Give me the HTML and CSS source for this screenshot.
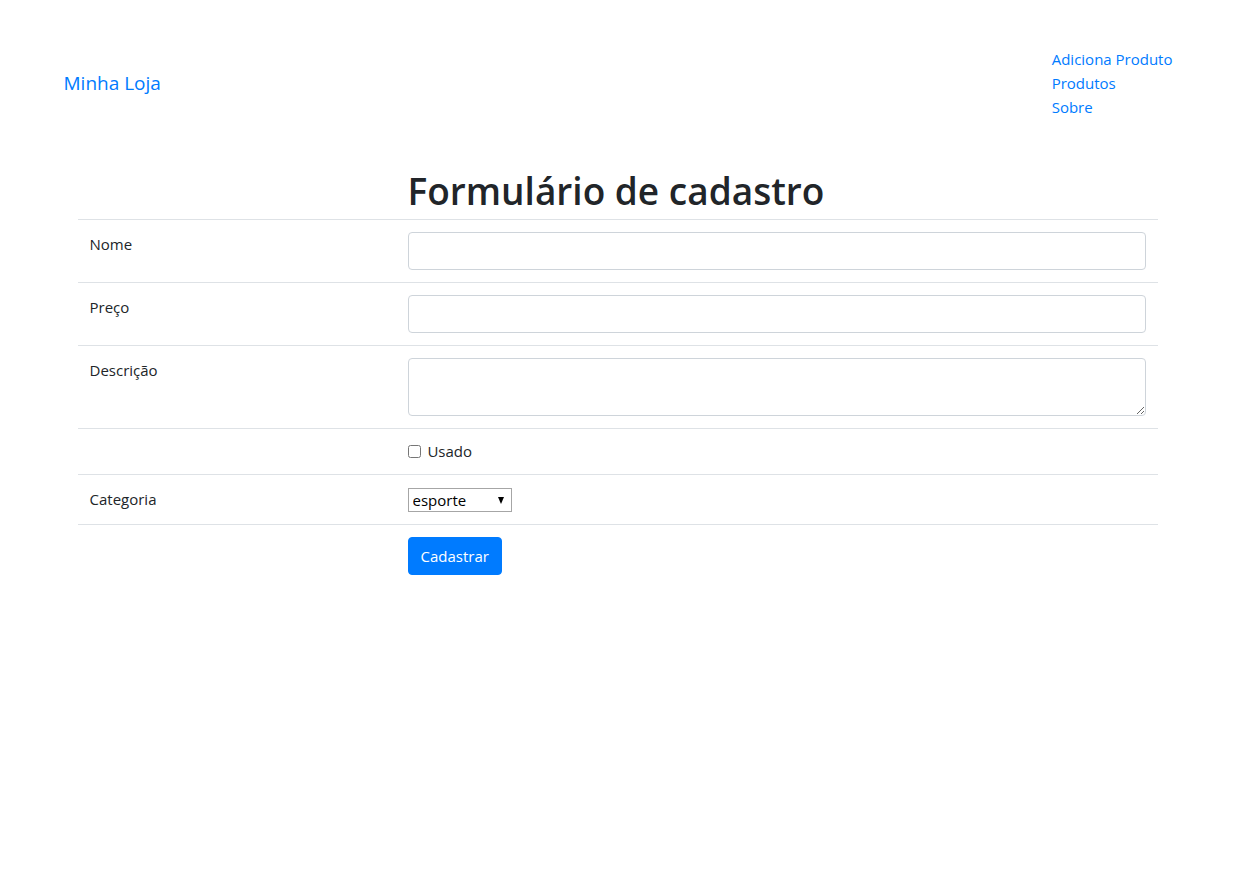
FILE: index.html
```html
<!DOCTYPE html>
<html lang="pt-BR">
<head>
    <meta charset="UTF-8">
    <meta name="viewport" content="width=device-width, initial-scale=1.0">
    <title>Minha Loja - Cadastro</title>
    <link rel="stylesheet" href="styles.css">
</head>
<body>

    <!-- ======= Header ======= -->
    <header class="site-header">
        <a class="brand" href="#">Minha Loja</a>
        <ul class="nav-list">
            <li><a href="#">Adiciona Produto</a></li>
            <li><a href="#">Produtos</a></li>
            <li><a href="#">Sobre</a></li>
        </ul>
    </header>

    <!-- ======= Formulário ======= -->
    <main class="container">
        <form class="product-form">
            <table class="form-table">
                <thead>
                    <tr>
                        <th></th>
                        <th><h1>Formulário de cadastro</h1></th>
                    </tr>
                </thead>
                <tbody>
                    <tr>
                        <td class="label-cell">Nome</td>
                        <td><input type="text" class="form-control" name="nome"></td>
                    </tr>
                    <tr>
                        <td class="label-cell">Preço</td>
                        <td><input type="text" class="form-control" name="preco"></td>
                    </tr>
                    <tr>
                        <td class="label-cell">Descrição</td>
                        <td><textarea class="form-control" rows="2" name="descricao"></textarea></td>
                    </tr>
                    <tr class="check-row">
                        <td></td>
                        <td><label class="check-label"><input type="checkbox" name="usado"> Usado</label></td>
                    </tr>
                    <tr>
                        <td class="label-cell">Categoria</td>
                        <td>
                            <span class="select-wrap">
                                <select name="categoria" class="category-select">
                                    <option>esporte</option>
                                    <option>escolar</option>
                                    <option>eletrônicos</option>
                                </select>
                            </span>
                        </td>
                    </tr>
                    <tr>
                        <td></td>
                        <td><button type="submit" class="btn-primary">Cadastrar</button></td>
                    </tr>
                </tbody>
            </table>
        </form>
    </main>

</body>
</html>
```

FILE: styles.css
```css
body {
    font-family: "Open Sans", "Noto Sans", sans-serif;
    font-size: 15px;
    line-height: 24px;
    color: #212529;
    margin: 0;
    background-color: #fff;
}

a {
    color: #007bff;
    text-decoration: none;
}

/* header */
.site-header {
    width: 1110px;
    margin: 0 auto;
    padding-top: 47px;
    display: flex;
    justify-content: space-between;
    align-items: center;
}

.brand {
    font-size: 19px;
    line-height: 30px;
    margin-left: -1px;
}

.nav-list {
    list-style: none;
    margin: 0;
    padding: 0 2px 0 0;
    white-space: nowrap;
}

/* form */
.container {
    width: 1110px;
    margin: 0 auto;
    padding-top: 48px;
}

.form-table {
    width: 1080px;
    margin: 0 0 0 13px;
    border-collapse: collapse;
}

.form-table th {
    padding: 0;
    text-align: left;
    font-weight: normal;
}

.form-table th:first-child {
    width: 318px;
}

.form-table h1 {
    font-size: 37px;
    line-height: 48px;
    font-weight: 600;
    margin: 0 0 4px 12px;
}

.form-table td {
    border-top: 1px solid #dee2e6;
    padding: 12px;
    vertical-align: top;
}

.form-control {
    display: block;
    box-sizing: border-box;
    width: 100%;
    height: 38px;
    padding: 6px 12px;
    font-family: inherit;
    font-size: 15px;
    line-height: 24px;
    color: #495057;
    border: 1px solid #ced4da;
    border-radius: 4px;
    background: #fff;
}

textarea.form-control {
    height: 58px;
    resize: vertical;
}

.check-label {
    display: block;
    line-height: 21px;
}

.check-label input {
    width: 13px;
    height: 13px;
    margin: 0 3px 0 0;
    vertical-align: -1px;
}

.select-wrap {
    position: relative;
    display: inline-block;
    margin-top: 1px;
}

.category-select {
    appearance: none;
    -webkit-appearance: none;
    box-sizing: border-box;
    width: 104px;
    height: 24px;
    padding: 0 0 0 4px;
    font-family: inherit;
    font-size: 15px;
    color: #000;
    background: #fff;
    border: 1px solid #a6a6a6;
    border-radius: 0;
}

.select-wrap::after {
    content: "";
    position: absolute;
    right: 8px;
    top: 9px;
    border-left: 3.5px solid transparent;
    border-right: 3.5px solid transparent;
    border-top: 7px solid #000;
    pointer-events: none;
}

.btn-primary {
    font-family: inherit;
    font-size: 15px;
    line-height: 24px;
    padding: 6px 12px;
    color: #fff;
    background-color: #007bff;
    border: 1px solid #007bff;
    border-radius: 4px;
    cursor: pointer;
}
```
